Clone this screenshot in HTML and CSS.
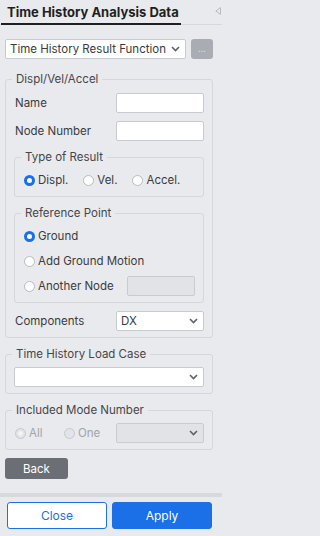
FILE: index.html
```html
<!DOCTYPE html>
<html lang="en">
<head>
<meta charset="utf-8">
<title>Time History Analysis Data</title>
<link rel="stylesheet" href="styles.css">
</head>
<body>
<div class="panel">
  <header class="tabs">
    <div class="tab">Time History Analysis Data</div>
    <svg class="collapse" width="6" height="8" viewBox="0 0 6 8"><path d="M5.5 0.6 L0.8 4 L5.5 7.4 Z" fill="none" stroke="#b8bbc0" stroke-width="1"/></svg>
  </header>

  <main class="content">
    <div class="func-row">
      <div class="select">
        <span class="select-text">Time History Result Function</span>
        <svg class="chev" width="9" height="6" viewBox="0 0 9 6"><path d="M1 1 L4.5 4.5 L8 1" fill="none" stroke="#5f6166" stroke-width="1.6"/></svg>
      </div>
      <button class="more" type="button">...</button>
    </div>

    <fieldset class="group outer">
      <legend>Displ/Vel/Accel</legend>
      <div class="field">
        <span class="label">Name</span>
        <input class="text" type="text">
      </div>
      <div class="field">
        <span class="label">Node Number</span>
        <input class="text" type="text">
      </div>

      <fieldset class="group inner">
        <legend>Type of Result</legend>
        <div class="radio-row">
          <label class="opt"><input type="radio" name="tor" checked>Displ.</label>
          <label class="opt"><input type="radio" name="tor">Vel.</label>
          <label class="opt"><input type="radio" name="tor">Accel.</label>
        </div>
      </fieldset>

      <fieldset class="group inner">
        <legend>Reference Point</legend>
        <div class="radio-list">
          <label class="opt"><input type="radio" name="ref" checked>Ground</label>
          <label class="opt"><input type="radio" name="ref">Add Ground Motion</label>
          <div class="opt-line">
            <label class="opt"><input type="radio" name="ref">Another Node</label>
            <input class="text node" type="text" disabled>
          </div>
        </div>
      </fieldset>

      <div class="field">
        <span class="label">Components</span>
        <div class="select">
          <span class="select-text">DX</span>
          <svg class="chev" width="9" height="6" viewBox="0 0 9 6"><path d="M1 1 L4.5 4.5 L8 1" fill="none" stroke="#5f6166" stroke-width="1.6"/></svg>
        </div>
      </div>
    </fieldset>

    <fieldset class="group">
      <legend>Time History Load Case</legend>
      <div class="select wide">
        <span class="select-text"></span>
        <svg class="chev" width="9" height="6" viewBox="0 0 9 6"><path d="M1 1 L4.5 4.5 L8 1" fill="none" stroke="#5f6166" stroke-width="1.6"/></svg>
      </div>
    </fieldset>

    <fieldset class="group mode">
      <legend>Included Mode Number</legend>
      <div class="field">
        <div class="mode-radios">
          <label class="opt off"><input type="radio" name="mode" disabled checked>All</label>
          <label class="opt off"><input type="radio" name="mode" disabled>One</label>
        </div>
        <div class="select disabled">
          <span class="select-text"></span>
          <svg class="chev" width="9" height="6" viewBox="0 0 9 6"><path d="M1 1 L4.5 4.5 L8 1" fill="none" stroke="#5f6166" stroke-width="1.6"/></svg>
        </div>
      </div>
    </fieldset>

    <button class="back" type="button">Back</button>
  </main>

  <footer class="footer">
    <button class="btn close" type="button">Close</button>
    <button class="btn apply" type="button">Apply</button>
  </footer>
</div>
</body>
</html>
```
FILE: styles.css
```css
* { box-sizing: border-box; }

html, body {
  margin: 0;
  padding: 0;
  background: #e9eaed;
}

body {
  font-family: Inter, "Liberation Sans", Arial, sans-serif;
  font-size: 11.5px;
  color: #3b3b3d;
  overflow: hidden;
}

.panel {
  width: 222px;
  height: 536px;
  display: flex;
  flex-direction: column;
}

.tabs {
  display: flex;
  align-items: flex-start;
  justify-content: space-between;
  border-bottom: 1px solid #d6d8db;
  height: 25px;
}

.tab {
  margin-left: 1px;
  width: 180px;
  padding: 4px 0 3px 6px;
  line-height: 16px;
  font-size: 13px;
  font-weight: 700;
  color: #1f1f21;
  border-bottom: 2px solid #1f1f21;
  margin-bottom: -1px;
  white-space: nowrap;
}

.collapse {
  margin-top: 7px;
  margin-right: 1px;
}

.content {
  padding: 14px 9px 0 5px;
  display: flex;
  flex-direction: column;
}

.func-row {
  display: flex;
  gap: 5px;
  height: 20px;
}

.func-row .select { flex: 1; }

.select {
  height: 20px;
  background: #fff;
  border: 1px solid #c7cacf;
  border-radius: 2px;
  display: flex;
  align-items: center;
  justify-content: space-between;
  padding: 0 5px 0 4px;
  white-space: nowrap;
  overflow: hidden;
}

.select-text {
  font-size: 11.5px;
  color: #3b3b3d;
}

.select.disabled {
  background: #e2e3e6;
  border-color: #c9cbcf;
}

.chev { flex: none; }

.more {
  width: 22px;
  height: 20px;
  border: none;
  border-radius: 3px;
  background: #a9adb3;
  color: #d6d9dd;
  font-family: inherit;
  font-size: 9px;
  padding: 0;
  line-height: 20px;
}

.group {
  margin: 8px 0 0;
  border: 1px solid #d5d7db;
  border-radius: 3px;
  padding: 5px 8px 6px 8px;
  min-width: 0;
}

.group.outer {
  margin-top: 12px;
  padding-top: 6px;
  display: flex;
  flex-direction: column;
  gap: 8px;
}

.group.inner { margin: 0; }

.group.mode { margin-top: 8px; }

legend {
  padding: 0 4px;
  margin-left: -2px;
  line-height: 16px;
  font-size: 11.5px;
  color: #46464a;
}

.field {
  display: grid;
  grid-template-columns: 1fr 88px;
  align-items: center;
  height: 20px;
}

.label {
  line-height: 20px;
  padding-left: 1px;
}

.text {
  width: 100%;
  height: 20px;
  background: #fff;
  border: 1px solid #c7cacf;
  border-radius: 2px;
  padding: 0;
  margin: 0;
}

.text.node {
  width: 68px;
  background: #e2e3e6;
  border-color: #c9cbcf;
}

.radio-row {
  display: flex;
  gap: 14px;
  height: 20px;
  align-items: center;
}

.radio-list {
  display: flex;
  flex-direction: column;
  gap: 5px;
}

.opt {
  display: flex;
  align-items: center;
  gap: 3px;
  height: 20px;
  line-height: 20px;
  white-space: nowrap;
}

.opt input {
  appearance: none;
  -webkit-appearance: none;
  width: 11px;
  height: 11px;
  margin: 0 0 0 1px;
  border-radius: 50%;
  border: 1px solid #b7bbc0;
  background: #fff;
  flex: none;
}

.opt input:checked {
  border: 3px solid #1b6fe7;
  background: #fff;
}

.opt.off { color: #a2a4a8; }

.opt.off input {
  background: #e3e4e7;
  border: 1px solid #c5c8cc;
}

.opt.off input:checked {
  border: 1px solid #c5c8cc;
  background: radial-gradient(circle, #f3f4f5 0 2px, #e3e4e7 2.5px);
}

.opt-line {
  display: flex;
  justify-content: space-between;
  align-items: center;
  height: 20px;
}

.mode-radios {
  display: grid;
  grid-template-columns: 49px auto;
  align-items: center;
}

.back {
  align-self: flex-start;
  margin-top: 8px;
  width: 63px;
  height: 21px;
  border: none;
  border-radius: 3px;
  background: #6b6e74;
  color: #fff;
  font-family: inherit;
  font-size: 11.5px;
  padding: 0;
}

.footer {
  margin-top: auto;
  border-top: 4px solid #d7d9dc;
  padding: 5px 10px 7px 7px;
  display: grid;
  grid-template-columns: 1fr 1fr;
  gap: 5px;
}

.btn {
  height: 27px;
  border-radius: 3px;
  font-family: inherit;
  font-size: 12px;
  padding: 0;
}

.btn.close {
  background: #fff;
  border: 1px solid #1b6fe7;
  color: #1b6fe7;
}

.btn.apply {
  background: #1b6fe7;
  border: 1px solid #1b6fe7;
  color: #fff;
}
```
